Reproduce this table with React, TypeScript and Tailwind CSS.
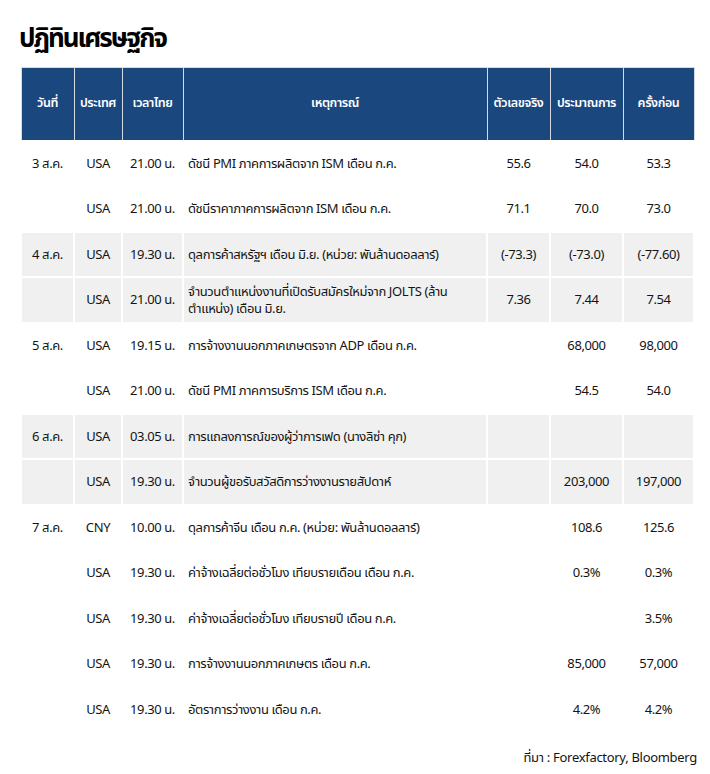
type Row = {
  date?: string;
  country: string;
  time: string;
  event: string;
  actual?: string;
  forecast?: string;
  previous?: string;
};

type Group = { rows: Row[]; shaded: boolean };

const groups: Group[] = [
  {
    shaded: false,
    rows: [
      { date: "3 ส.ค.", country: "USA", time: "21.00 น.", event: "ดัชนี PMI ภาคการผลิตจาก ISM เดือน ก.ค.", actual: "55.6", forecast: "54.0", previous: "53.3" },
      { country: "USA", time: "21.00 น.", event: "ดัชนีราคาภาคการผลิตจาก ISM เดือน ก.ค.", actual: "71.1", forecast: "70.0", previous: "73.0" },
    ],
  },
  {
    shaded: true,
    rows: [
      { date: "4 ส.ค.", country: "USA", time: "19.30 น.", event: "ดุลการค้าสหรัฐฯ เดือน มิ.ย. (หน่วย: พันล้านดอลลาร์)", actual: "(-73.3)", forecast: "(-73.0)", previous: "(-77.60)" },
      { country: "USA", time: "21.00 น.", event: "จำนวนตำแหน่งงานที่เปิดรับสมัครใหม่จาก JOLTS (ล้าน ตำแหน่ง) เดือน มิ.ย.", actual: "7.36", forecast: "7.44", previous: "7.54" },
    ],
  },
  {
    shaded: false,
    rows: [
      { date: "5 ส.ค.", country: "USA", time: "19.15 น.", event: "การจ้างงานนอกภาคเกษตรจาก ADP เดือน ก.ค.", forecast: "68,000", previous: "98,000" },
      { country: "USA", time: "21.00 น.", event: "ดัชนี PMI ภาคการบริการ ISM เดือน ก.ค.", forecast: "54.5", previous: "54.0" },
    ],
  },
  {
    shaded: true,
    rows: [
      { date: "6 ส.ค.", country: "USA", time: "03.05 น.", event: "การแถลงการณ์ของผู้ว่าการเฟด (นางลิซ่า คุก)" },
      { country: "USA", time: "19.30 น.", event: "จำนวนผู้ขอรับสวัสดิการว่างงานรายสัปดาห์", forecast: "203,000", previous: "197,000" },
    ],
  },
  {
    shaded: false,
    rows: [
      { date: "7 ส.ค.", country: "CNY", time: "10.00 น.", event: "ดุลการค้าจีน เดือน ก.ค. (หน่วย: พันล้านดอลลาร์)", forecast: "108.6", previous: "125.6" },
      { country: "USA", time: "19.30 น.", event: "ค่าจ้างเฉลี่ยต่อชั่วโมง เทียบรายเดือน เดือน ก.ค.", forecast: "0.3%", previous: "0.3%" },
      { country: "USA", time: "19.30 น.", event: "ค่าจ้างเฉลี่ยต่อชั่วโมง เทียบรายปี เดือน ก.ค.", previous: "3.5%" },
      { country: "USA", time: "19.30 น.", event: "การจ้างงานนอกภาคเกษตร เดือน ก.ค.", forecast: "85,000", previous: "57,000" },
      { country: "USA", time: "19.30 น.", event: "อัตราการว่างงาน เดือน ก.ค.", forecast: "4.2%", previous: "4.2%" },
    ],
  },
];

const headers = ["วันที่", "ประเทศ", "เวลาไทย", "เหตุการณ์", "ตัวเลขจริง", "ประมาณการ", "ครั้งก่อน"];

export default function App() {
  return (
    <div
      className="w-[710px] h-[774px] bg-white text-[#141414] overflow-hidden"
      style={{ fontFamily: '"Noto Sans", "Noto Sans Thai", "Liberation Sans", sans-serif' }}
    >
      <h1 className="pl-[19px] pt-[19px] h-[67px] text-[26px] font-bold leading-[36px] tracking-[-2px] text-black">
        ปฏิทินเศรษฐกิจ
      </h1>

      <table className="ml-[20px] w-[673px] table-fixed border-collapse text-[13px] tracking-[-0.4px]">
        <colgroup>
          <col className="w-[53px]" />
          <col className="w-[48px]" />
          <col className="w-[61px]" />
          <col className="w-[304px]" />
          <col className="w-[63px]" />
          <col className="w-[73px]" />
          <col className="w-[71px]" />
        </colgroup>
        <thead>
          <tr className="h-[73px] bg-[#1b477f] text-white">
            {headers.map((h) => (
              <th key={h} className="border-[1.5px] border-[#d6dbe3] px-1 text-center text-[12.5px] font-semibold">
                {h}
              </th>
            ))}
          </tr>
        </thead>
        <tbody>
          {groups.map((g, gi) =>
            g.rows.map((r, ri) => (
              <tr
                key={`${gi}-${ri}`}
                className={`h-[45.5px] ${g.shaded ? "bg-[#f0f0f0]" : "bg-white"}`}
              >
                <td className="border-2 border-white text-center">{r.date}</td>
                <td className="border-2 border-white text-center">{r.country}</td>
                <td className="border-2 border-white text-center">{r.time}</td>
                <td className="border-2 border-white pl-[4px] pr-[6px] leading-[17px]">{r.event}</td>
                <td className="border-2 border-white text-center">{r.actual}</td>
                <td className="border-2 border-white text-center">{r.forecast}</td>
                <td className="border-2 border-white text-center">{r.previous}</td>
              </tr>
            ))
          )}
        </tbody>
      </table>

      <p className="pr-[13px] pt-[15px] text-right text-[13px] tracking-[-0.3px]">
        ที่มา : Forexfactory, Bloomberg
      </p>
    </div>
  );
}
